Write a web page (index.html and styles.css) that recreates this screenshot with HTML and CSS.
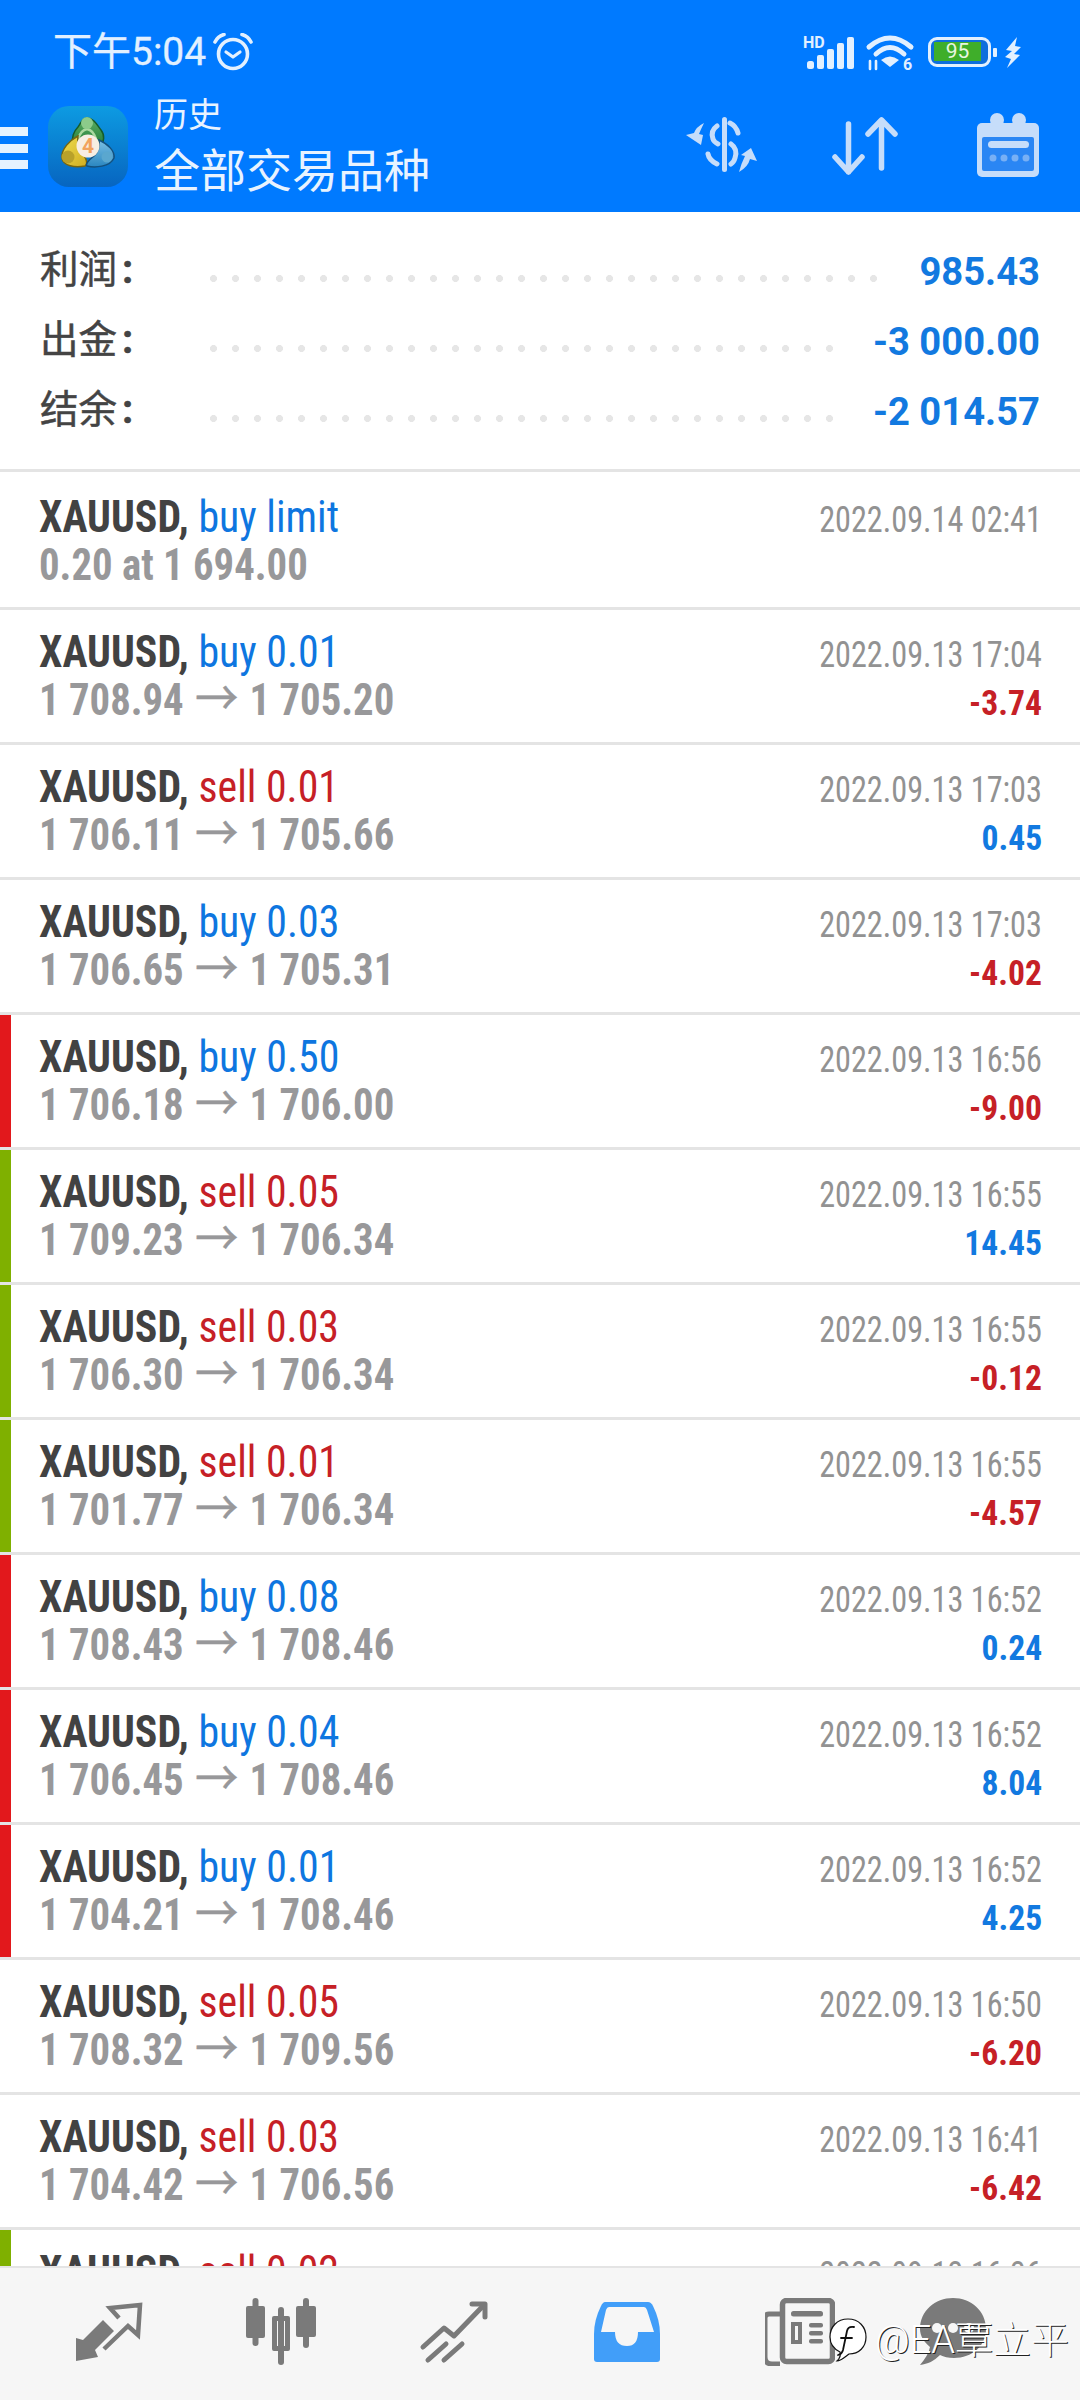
FILE: index.html
```html
<!DOCTYPE html>
<html lang="zh"><head><meta charset="utf-8"><title>历史</title><link rel="stylesheet" href="styles.css"></head>
<body>
<div class="page">
  <header class="top">
    <div class="status">
      <span class="time">下午5:04</span>
      <svg class="alarm" width="40" height="38" viewBox="0 0 40 38" fill="none" stroke="#e2f0ff" stroke-linecap="round" stroke-linejoin="round"><circle cx="20" cy="21" r="14.5" stroke-width="3.6"/><path d="M13 19l7 5 7-5" stroke-width="3.2"/><path d="M2 9Q5 3 11 1.500M38 9Q35 3 29 1.500" stroke-width="3.6"/></svg>
      <div class="status-right">
        <svg class="signal" width="50" height="32" viewBox="0 0 50 32"><text x="-1" y="10.500" class="hd">HD</text><g fill="#e2f0ff"><rect x="3" y="24" width="7" height="8" rx="2.500"/><rect x="13" y="18" width="7" height="14" rx="2"/><rect x="23" y="12" width="7" height="20" rx="2"/><rect x="33" y="6" width="7" height="26" rx="2"/><rect x="43" y="0" width="7" height="32" rx="2"/></g></svg>
        <svg class="wifi" width="48" height="36" viewBox="0 0 48 36" fill="none" stroke="#e2f0ff" stroke-width="5" stroke-linecap="round"><path d="M3 12Q24-6 45 12"/><path d="M10 19Q24 6 38 19"/><path d="M24 32l-9-7q9-7 18 0z" fill="#e2f0ff" stroke="none"/><path d="M4 34v-8M10 34v-8" stroke-width="2.600"/><text x="37" y="35" class="wifi-six" stroke="none">6</text></svg>
        <div class="battery"><div class="battery-body"><span class="battery-fill">95</span></div><span class="battery-tip"></span></div>
        <svg class="bolt" width="16" height="31" viewBox="0 0 16 31"><path d="M12 0L1 13l6 1-7 6 6 2-4 9 13-13-6-1 7-7-6-1z" fill="#e2f0ff"/></svg>
      </div>
    </div>
    <div class="appbar">
      <div class="burger"><span></span><span></span><span></span></div>
      <svg class="mt4" width="80" height="81" viewBox="0 0 80 81">
        <defs>
          <linearGradient id="bgG" x1="0" y1="0" x2="0" y2="1"><stop offset="0" stop-color="#0d9be2"/><stop offset="1" stop-color="#0765c0"/></linearGradient>
          <linearGradient id="greenG" x1="0" y1="0" x2="0" y2="1"><stop offset="0" stop-color="#5cae62"/><stop offset="1" stop-color="#1f7a38"/></linearGradient>
          <linearGradient id="yellowG" x1="0" y1="0" x2="1" y2="1"><stop offset="0" stop-color="#eedc4e"/><stop offset="1" stop-color="#d0ae22"/></linearGradient>
          <linearGradient id="blueG" x1="0" y1="0" x2="0" y2="1"><stop offset="0" stop-color="#7cc0e4"/><stop offset="1" stop-color="#2a86c0"/></linearGradient>
        </defs>
        <rect width="80" height="81" rx="21" fill="url(#bgG)"/>
        <path d="M39 12C46 12 49 19 53 24C57 29 56 36 53 40L39 42L25 38C23 32 26 25 30 21C33 17 34 12 39 12Z" fill="url(#greenG)" stroke="#155c2a" stroke-width="1.500"/>
        <path d="M30 33Q33 24 39 23Q45 24 48 33" fill="none" stroke="#a9d89f" stroke-width="2.500"/>
        <circle cx="39" cy="17" r="6" fill="#8ccb8a"/>
        <path d="M30 30C22 34 13 43 14 52C15 60 27 62 37 60C41 58 37 50 34 46C31 42 29 36 30 30Z" fill="url(#yellowG)" stroke="#76650f" stroke-width="1.500"/>
        <circle cx="20" cy="51" r="6.500" fill="#b9a12a"/>
        <path d="M51 34C60 38 67 45 66 52C62 61 47 62 39 60C37 58 41 54 46 50C50 46 52 40 51 34Z" fill="url(#blueG)" stroke="#14517e" stroke-width="1.500"/>
        <circle cx="59" cy="51" r="5.500" fill="#5aa7cf"/>
        <circle cx="40" cy="40" r="11.500" fill="#f7eee3"/>
        <text x="40" y="47" class="mt4-four">4</text>
      </svg>
      <div class="titles">
        <div class="title-small">历史</div>
        <div class="title-big">全部交易品种</div>
      </div>
      <div class="actions">
        <svg class="act-money" width="72" height="55" viewBox="0 0 72 55" fill="#c6ddfa"><rect x="36" y="0" width="5" height="55" rx="2.500"/><path d="M44 6Q50 9 52 16M31 9Q24 14 27 22Q28 25 32 27M45 27Q52 32 49 41Q48 45 45 47M22 37Q23 43 31 47" fill="none" stroke="#c6ddfa" stroke-width="5" stroke-linecap="round"/><path d="M15 28L0 18L8 16Q10 10 18 6Q15 12 13 17L17 18Z"/><path d="M65 31L71 44L64 42Q62 50 53 55Q55 47 59 39L55 38Z"/></svg>
        <svg class="act-sort" width="66" height="58" viewBox="0 0 66 58" fill="none" stroke="#c6ddfa" stroke-width="5.500" stroke-linecap="round" stroke-linejoin="round"><path d="M16.500 7V55M3 40L16.500 55L30 40"/><path d="M49.500 51V3M36 17L49.500 3L63 17"/></svg>
        <svg class="act-cal" width="62" height="64" viewBox="0 0 62 64"><rect y="10" width="62" height="54" rx="5" fill="#c6ddfa"/><circle cx="20" cy="7" r="7" fill="#c6ddfa"/><circle cx="42" cy="7" r="7" fill="#c6ddfa"/><rect x="5" y="24" width="52" height="34" rx="2" fill="#2a86f4"/><rect x="11" y="28" width="41" height="7" rx="3.500" fill="#c6ddfa"/><g fill="#78b0f5"><circle cx="16" cy="45" r="3.500"/><circle cx="27" cy="45" r="3.500"/><circle cx="38" cy="45" r="3.500"/><circle cx="49" cy="45" r="3.500"/></g></svg>
      </div>
    </div>
  </header>

  <section class="summary">
    <div class="sum-row"><span class="sum-label">利润<span class="colon">:</span></span><span class="sum-dots"></span><span class="sum-value">985.43</span></div>
    <div class="sum-row"><span class="sum-label">出金<span class="colon">:</span></span><span class="sum-dots"></span><span class="sum-value">-3 000.00</span></div>
    <div class="sum-row"><span class="sum-label">结余<span class="colon">:</span></span><span class="sum-dots"></span><span class="sum-value">-2 014.57</span></div>
  </section>

  <main class="list">
    <article class="row row-first"><i class="mark"></i><div class="info"><div class="line"><b class="sym">XAUUSD,</b> <span class="buy">buy limit</span></div><div class="price">0.20 at 1 694.00</div></div><div class="side"><div><span class="date">2022.09.14 02:41</span></div></div></article>
    <article class="row"><i class="mark"></i><div class="info"><div class="line"><b class="sym">XAUUSD,</b> <span class="buy">buy 0.01</span></div><div class="price">1 708.94 <span class="arrow">→</span> 1 705.20</div></div><div class="side"><div><span class="date">2022.09.13 17:04</span></div><div><b class="loss">-3.74</b></div></div></article>
    <article class="row"><i class="mark"></i><div class="info"><div class="line"><b class="sym">XAUUSD,</b> <span class="sell">sell 0.01</span></div><div class="price">1 706.11 <span class="arrow">→</span> 1 705.66</div></div><div class="side"><div><span class="date">2022.09.13 17:03</span></div><div><b class="gain">0.45</b></div></div></article>
    <article class="row"><i class="mark"></i><div class="info"><div class="line"><b class="sym">XAUUSD,</b> <span class="buy">buy 0.03</span></div><div class="price">1 706.65 <span class="arrow">→</span> 1 705.31</div></div><div class="side"><div><span class="date">2022.09.13 17:03</span></div><div><b class="loss">-4.02</b></div></div></article>
    <article class="row"><i class="mark mark-red"></i><div class="info"><div class="line"><b class="sym">XAUUSD,</b> <span class="buy">buy 0.50</span></div><div class="price">1 706.18 <span class="arrow">→</span> 1 706.00</div></div><div class="side"><div><span class="date">2022.09.13 16:56</span></div><div><b class="loss">-9.00</b></div></div></article>
    <article class="row"><i class="mark mark-green"></i><div class="info"><div class="line"><b class="sym">XAUUSD,</b> <span class="sell">sell 0.05</span></div><div class="price">1 709.23 <span class="arrow">→</span> 1 706.34</div></div><div class="side"><div><span class="date">2022.09.13 16:55</span></div><div><b class="gain">14.45</b></div></div></article>
    <article class="row"><i class="mark mark-green"></i><div class="info"><div class="line"><b class="sym">XAUUSD,</b> <span class="sell">sell 0.03</span></div><div class="price">1 706.30 <span class="arrow">→</span> 1 706.34</div></div><div class="side"><div><span class="date">2022.09.13 16:55</span></div><div><b class="loss">-0.12</b></div></div></article>
    <article class="row"><i class="mark mark-green"></i><div class="info"><div class="line"><b class="sym">XAUUSD,</b> <span class="sell">sell 0.01</span></div><div class="price">1 701.77 <span class="arrow">→</span> 1 706.34</div></div><div class="side"><div><span class="date">2022.09.13 16:55</span></div><div><b class="loss">-4.57</b></div></div></article>
    <article class="row"><i class="mark mark-red"></i><div class="info"><div class="line"><b class="sym">XAUUSD,</b> <span class="buy">buy 0.08</span></div><div class="price">1 708.43 <span class="arrow">→</span> 1 708.46</div></div><div class="side"><div><span class="date">2022.09.13 16:52</span></div><div><b class="gain">0.24</b></div></div></article>
    <article class="row"><i class="mark mark-red"></i><div class="info"><div class="line"><b class="sym">XAUUSD,</b> <span class="buy">buy 0.04</span></div><div class="price">1 706.45 <span class="arrow">→</span> 1 708.46</div></div><div class="side"><div><span class="date">2022.09.13 16:52</span></div><div><b class="gain">8.04</b></div></div></article>
    <article class="row"><i class="mark mark-red"></i><div class="info"><div class="line"><b class="sym">XAUUSD,</b> <span class="buy">buy 0.01</span></div><div class="price">1 704.21 <span class="arrow">→</span> 1 708.46</div></div><div class="side"><div><span class="date">2022.09.13 16:52</span></div><div><b class="gain">4.25</b></div></div></article>
    <article class="row"><i class="mark"></i><div class="info"><div class="line"><b class="sym">XAUUSD,</b> <span class="sell">sell 0.05</span></div><div class="price">1 708.32 <span class="arrow">→</span> 1 709.56</div></div><div class="side"><div><span class="date">2022.09.13 16:50</span></div><div><b class="loss">-6.20</b></div></div></article>
    <article class="row"><i class="mark"></i><div class="info"><div class="line"><b class="sym">XAUUSD,</b> <span class="sell">sell 0.03</span></div><div class="price">1 704.42 <span class="arrow">→</span> 1 706.56</div></div><div class="side"><div><span class="date">2022.09.13 16:41</span></div><div><b class="loss">-6.42</b></div></div></article>
    <article class="row"><i class="mark mark-green"></i><div class="info"><div class="line"><b class="sym">XAUUSD,</b> <span class="sell">sell 0.02</span></div></div><div class="side"><div><span class="date">2022.09.13 16:36</span></div></div></article>
  </main>

  <nav class="tabs">
    <svg class="tab" width="70" height="68" viewBox="-2 -5 70 68" fill="#7a7a7a"><path d="M1 58L1 35L8 37L28 17L39 28L20 47L23 54Z"/><path d="M44 15L35 5L65 2L63 32L53 23L29 46" fill="none" stroke="#7a7a7a" stroke-width="4.500"/></svg>
    <svg class="tab" width="70" height="68" viewBox="0 0 70 68" fill="#7a7a7a"><rect x="6.500" y="0" width="6" height="48" rx="3"/><rect x="0" y="8" width="19" height="32" rx="2"/><rect x="32" y="9" width="6" height="58" rx="3"/><path fill-rule="evenodd" d="M28 18h14a2 2 0 0 1 2 2v31a2 2 0 0 1-2 2H28a2 2 0 0 1-2-2V20a2 2 0 0 1 2-2zM31 23v25h8V23z"/><rect x="57" y="0" width="6" height="50" rx="3"/><rect x="50" y="8" width="20" height="31" rx="2"/></svg>
    <svg class="tab" width="70" height="68" viewBox="-3 -4 70 68" fill="none" stroke="#7a7a7a" stroke-width="5" stroke-linecap="round" stroke-linejoin="round"><path d="M1 45L22 26L32 34L62 3"/><path d="M50 2L63 2L63 15"/><path d="M6 58L24 42M22 58L40 42"/></svg>
    <svg class="tab" width="70" height="68" viewBox="-2 -4 70 68"><path d="M11 0H54Q57 0 59 4Q66 18 66 32V57Q66 60 63 60H3Q0 60 0 57V32Q0 18 7 4Q9 0 11 0Z" fill="#419ef9"/><path d="M15 5H50Q52 5 53 8L60 30H44Q44 44 33 44Q21 44 21 30H7L12 8Q13 5 15 5Z" fill="#f6f6f6"/></svg>
    <svg class="tab" width="70" height="68" viewBox="0 0 70 68" fill="#7a7a7a"><path d="M16 16H4Q0 16 0 20V59Q0 66 7 66H15" fill="none" stroke="#7a7a7a" stroke-width="5"/><rect x="17.500" y="2.500" width="50" height="61" rx="4" fill="none" stroke="#7a7a7a" stroke-width="5.500"/><rect x="26" y="13" width="32" height="5.500" rx="2.500"/><path fill-rule="evenodd" d="M26 24h11v22H26zM30 28v14h3V28z"/><rect x="44" y="25" width="14" height="4.500" rx="2"/><rect x="44" y="33" width="14" height="4.500" rx="2"/><rect x="44" y="41" width="14" height="4.500" rx="2"/></svg>
    <svg class="tab tab-chat" width="66" height="68" viewBox="0 0 66 68"><path d="M33 0C51 0 66 13 66 31C66 48 52 60 34 60C28 60 24 59 20 57C14 63 8 66 0 67C5 61 9 55 10 49C4 44 0 38 0 31C0 13 15 0 33 0Z" fill="#7a7a7a"/><circle cx="17" cy="30" r="5" fill="#f6f6f6"/><circle cx="33" cy="30" r="5" fill="#f6f6f6"/><circle cx="49" cy="30" r="5" fill="#f6f6f6"/></svg>
  </nav>

  <div class="watermark">
    <svg class="wm-logo" width="38" height="44" viewBox="0 0 38 44"><path d="M19 1C30 1 37 9 37 19C37 29 30 36 20 36C17 38 12 43 8 43C11 40 12 37 11 34C5 31 1 26 1 19C1 9 8 1 19 1Z" fill="#fff" stroke="#111" stroke-width="1.200"/><path d="M25 9Q19 8 18 13L14 32Q13 36 9 37M12 20H23" fill="none" stroke="#111" stroke-width="1.800" stroke-linecap="round"/></svg>
    <span class="wm-text">@EA覃立平</span>
  </div>
</div>
</body></html>
```
FILE: styles.css
```css
* { box-sizing: border-box; }
html, body { margin: 0; padding: 0; background: #fff; }
body { font-family: Roboto, "Noto Sans CJK SC", sans-serif; }
.page { position: relative; width: 1080px; height: 2400px; display: flex; flex-direction: column; overflow: hidden; background: #fff; }

/* top blue area */
.top { height: 212px; flex: none; background: #007aff; color: #e8f3ff; }
.status { height: 88px; display: flex; align-items: flex-start; padding: 28px 59px 0 53px; }
.time { font-size: 39px; line-height: 48px; color: #e2f0ff; -webkit-text-stroke: 0.3px #e2f0ff; }
.alarm { display: block; margin: 5px 0 0 7px; }
.status-right { margin-left: auto; display: flex; align-items: flex-start; }
.signal { display: block; margin: 9px 0 0 0; overflow: visible; }
.hd { font: 700 16px Roboto, sans-serif; fill: #e2f0ff; }
.wifi { display: block; margin: 7px 0 0 12px; overflow: visible; }
.wifi-six { font: 700 16px Roboto, sans-serif; fill: #e2f0ff; }
.battery { display: flex; align-items: center; margin: 9px 0 0 14px; }
.battery-body { width: 63px; height: 30px; border: 3.500px solid #e2f0ff; border-radius: 9px; padding: 2px 3px; background: #0f6fdc; }
.battery-fill { display: block; width: 47px; height: 19px; background: #3fae2a; color: #e8f6e0; font-size: 21px; line-height: 19px; text-align: center; }
.battery-tip { display: block; width: 4px; height: 9px; margin-left: 2px; background: #e2f0ff; border-radius: 1px; }
.bolt { display: block; margin: 9px 0 0 8px; }

.appbar { display: flex; align-items: flex-start; height: 124px; }
.burger { width: 28px; margin-top: 39px; display: flex; flex-direction: column; gap: 7.500px; }
.burger span { display: block; height: 9px; background: #e6f3ff; }
.mt4 { display: block; margin: 18px 0 0 20px; flex: none; }
.mt4-four { font: 700 21px Roboto, sans-serif; fill: #f2a35e; text-anchor: middle; }
.titles { margin: 5px 0 0 26px; color: #e8f3ff; }
.title-small { font-size: 34px; line-height: 44px; }
.title-big { font-size: 46px; line-height: 56px; margin-top: 6px; }
.actions { margin-left: auto; padding-right: 41px; display: flex; align-items: flex-start; }
.act-money { display: block; margin-top: 29px; }
.act-sort { display: block; margin: 29px 0 0 74px; }
.act-cal { display: block; margin: 25px 0 0 79px; }

/* summary */
.summary { flex: none; height: 260px; padding: 23px 40px 0; border-bottom: 3px solid #e4e4e4; }
.sum-row { height: 70px; display: flex; align-items: center; }
.sum-label { width: 170px; flex: none; font-size: 38.500px; color: #444; line-height: 70px; -webkit-text-stroke: 0.5px #444; }
.colon { margin-left: 5px; font-weight: 700; font-size: 40px; }
.sum-dots { flex: 1; height: 7px; margin: 16px 40px 0 0; background: radial-gradient(circle at 3.500px 3.500px, #e6e6e6 3.200px, transparent 3.800px) 0 0 / 22px 7px repeat-x; }
.sum-value { font-size: 38.200px; font-weight: 700; color: #1279e0; line-height: 70px; margin-top: 3px; }

/* list */
.list { flex: 1; min-height: 0; overflow: hidden; background: #fff; }
.row { height: 135px; display: flex; border-bottom: 3px solid #e4e4e4; font-stretch: 75%; font-size: 45px; line-height: 48px; }
.row-first { height: 138px; }
.row-first .info, .row-first .side { padding-top: 21px; }
.mark { display: block; width: 11px; flex: none; }
.mark-red { background: #e2181c; }
.mark-green { background: #7fb000; }
.info { padding: 18px 0 0 28px; flex: 1; white-space: nowrap; }
.line { transform: scaleX(0.93); transform-origin: 0 50%; }
.sym { font-weight: 700; color: #424242; }
.buy { color: #0e76e0; }
.sell { color: #c62026; }
.price { color: #98989a; font-weight: 700; transform: scaleX(0.905); transform-origin: 0 50%; }
.arrow { font-family: "Noto Sans CJK SC", sans-serif; font-weight: 400; font-size: 48px; line-height: 0; margin: 0 2px; -webkit-text-stroke: 0.4px #98989a; }
.side { padding: 18px 38px 0 0; text-align: right; white-space: nowrap; }
.date { display: inline-block; font-size: 36px; line-height: 1; color: #929292; transform: scaleX(0.895); transform-origin: 100% 50%; }
.loss, .gain { display: inline-block; font-size: 35px; line-height: 1; font-weight: 700; transform: scaleX(0.96); transform-origin: 100% 50%; }
.loss { color: #c62026; }
.gain { color: #1279e0; }

/* bottom tabs */
.tabs { flex: none; height: 134px; background: #f6f6f6; border-top: 2px solid #e4e4e4; display: flex; align-items: flex-start; padding: 30px 0 0 73px; gap: 103px; }
.tab { display: block; flex: none; }
.tab-chat { margin-left: -18px; }

/* watermark over the tabs */
.watermark { position: absolute; left: 829px; top: 2318px; display: flex; align-items: center; gap: 8px; }
.wm-logo { display: block; }
.wm-text { font-size: 38px; line-height: 44px; color: #fff; font-weight: 300; text-shadow: 1px 1px 0 #222; white-space: nowrap; }
```
